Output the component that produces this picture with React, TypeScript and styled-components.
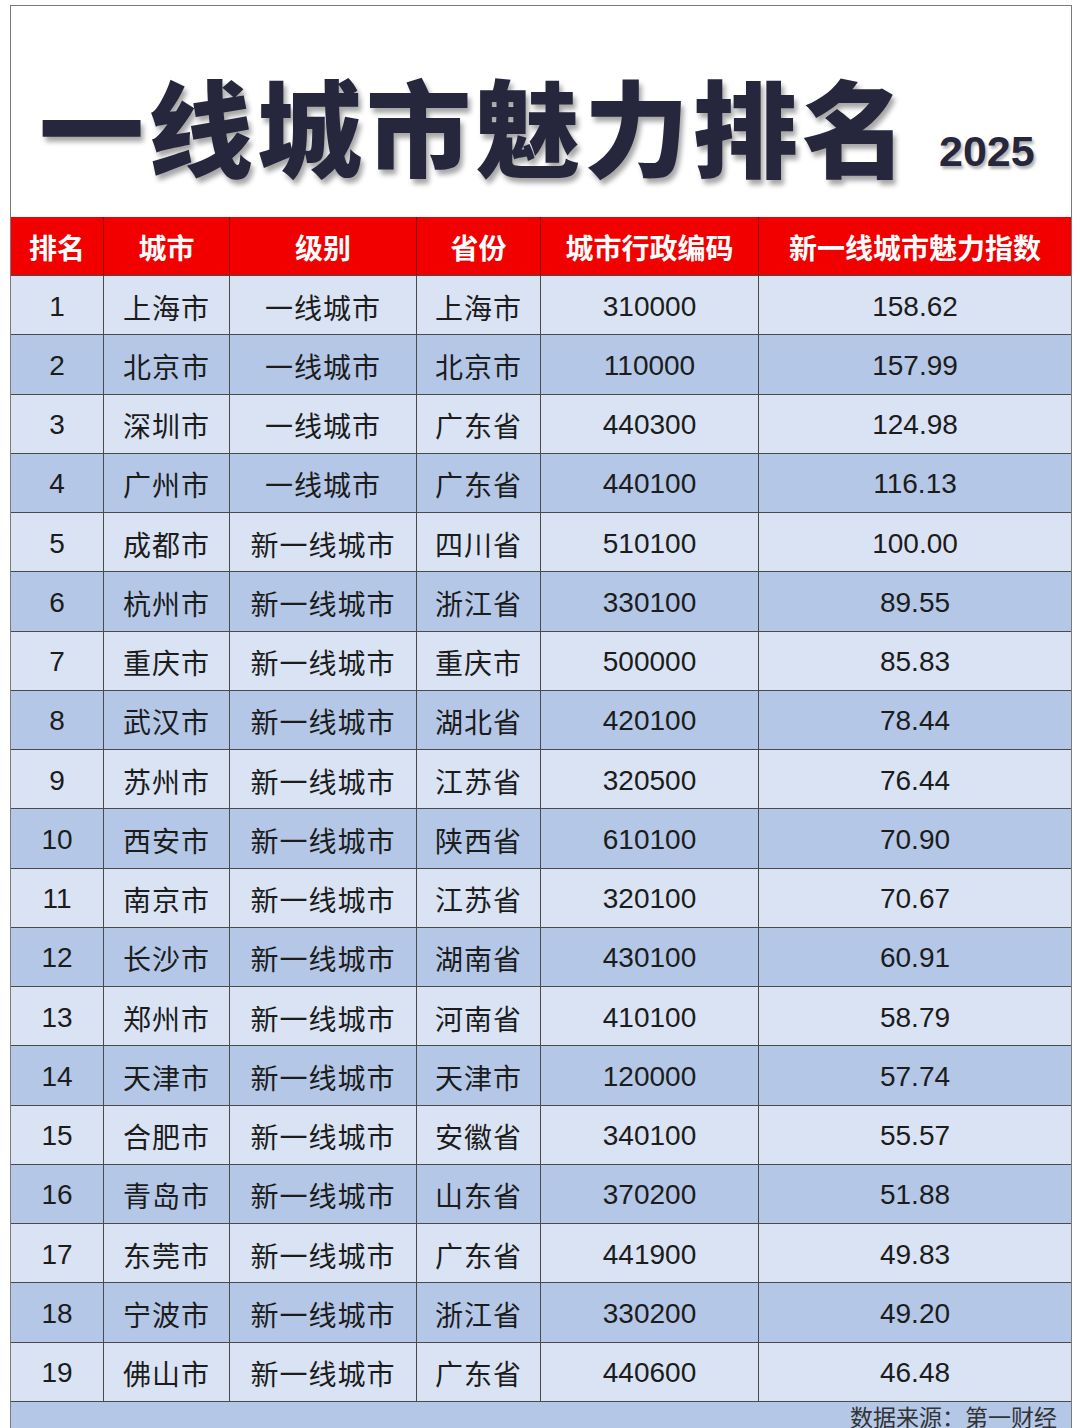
import React from 'react'
import styled, { createGlobalStyle } from 'styled-components'

const GlobalStyle = createGlobalStyle`
  html, body {
    margin: 0;
    padding: 0;
    background: #ffffff;
  }
  body {
    font-family: "Noto Sans CJK SC", "Noto Sans", sans-serif;
  }
`

type Row = [string, string, string, string, string, string]

const rows: Row[] = [
  ['1', '上海市', '一线城市', '上海市', '310000', '158.62'],
  ['2', '北京市', '一线城市', '北京市', '110000', '157.99'],
  ['3', '深圳市', '一线城市', '广东省', '440300', '124.98'],
  ['4', '广州市', '一线城市', '广东省', '440100', '116.13'],
  ['5', '成都市', '新一线城市', '四川省', '510100', '100.00'],
  ['6', '杭州市', '新一线城市', '浙江省', '330100', '89.55'],
  ['7', '重庆市', '新一线城市', '重庆市', '500000', '85.83'],
  ['8', '武汉市', '新一线城市', '湖北省', '420100', '78.44'],
  ['9', '苏州市', '新一线城市', '江苏省', '320500', '76.44'],
  ['10', '西安市', '新一线城市', '陕西省', '610100', '70.90'],
  ['11', '南京市', '新一线城市', '江苏省', '320100', '70.67'],
  ['12', '长沙市', '新一线城市', '湖南省', '430100', '60.91'],
  ['13', '郑州市', '新一线城市', '河南省', '410100', '58.79'],
  ['14', '天津市', '新一线城市', '天津市', '120000', '57.74'],
  ['15', '合肥市', '新一线城市', '安徽省', '340100', '55.57'],
  ['16', '青岛市', '新一线城市', '山东省', '370200', '51.88'],
  ['17', '东莞市', '新一线城市', '广东省', '441900', '49.83'],
  ['18', '宁波市', '新一线城市', '浙江省', '330200', '49.20'],
  ['19', '佛山市', '新一线城市', '广东省', '440600', '46.48'],
]

const headers = ['排名', '城市', '级别', '省份', '城市行政编码', '新一线城市魅力指数']

// columns: rank, city, level, province, code, index
const columns = '92px 126px 187px 124px 218px 1fr'
const numericCols = [0, 4, 5]

const Page = styled.div`
  padding: 5px 8px 0 10px;
`

const Frame = styled.div`
  width: 1062px;
  box-sizing: border-box;
  border: 1px solid #7a7a7a;
  border-bottom: none;
`

const TitleBar = styled.div`
  height: 211px;
  display: flex;
  align-items: center;
  padding-left: 28px;
  padding-top: 24px;
  box-sizing: border-box;
`

const Title = styled.h1`
  margin: 0;
  font-family: "Noto Sans CJK SC", sans-serif;
  font-weight: 900;
  font-size: 105px;
  letter-spacing: 4px;
  line-height: 1;
  color: #26263d;
  text-shadow: 3px 5px 5px rgba(0, 0, 0, 0.35);
`

const Year = styled.span`
  margin-left: 28px;
  margin-top: 56px;
  font-family: "Liberation Sans", Arial, sans-serif;
  font-weight: 700;
  font-size: 43px;
  color: #26263d;
  text-shadow: 2px 3px 3px rgba(0, 0, 0, 0.3);
`

const GridRow = styled.div<{ $bg: string; $h: number }>`
  display: grid;
  grid-template-columns: ${columns};
  height: ${(p) => p.$h}px;
  background: ${(p) => p.$bg};
  border-bottom: 1px solid #4a4a4a;
  box-sizing: border-box;
`

const HeadCell = styled.div`
  display: flex;
  align-items: center;
  justify-content: center;
  padding-top: 2px;
  color: #ffffff;
  font-family: "Noto Sans CJK SC", sans-serif;
  font-weight: 700;
  font-size: 28px;
  border-left: 1px solid #8a0000;
  &:first-child {
    border-left: none;
  }
`

const Cell = styled.div<{ $num: boolean }>`
  display: flex;
  align-items: center;
  justify-content: center;
  padding-top: 3px;
  color: #1c1c1c;
  font-family: ${(p) =>
    p.$num ? '"Liberation Sans", Arial, sans-serif' : '"Noto Sans CJK SC", sans-serif'};
  font-size: 28px;
  letter-spacing: ${(p) => (p.$num ? '0' : '1px')};
  border-left: 1px solid #4a4a4a;
  &:first-child {
    border-left: none;
  }
`

const Footer = styled.div`
  height: 40px;
  background: #b4c7e7;
  display: flex;
  justify-content: flex-end;
  align-items: flex-start;
  padding: 3px 14px 0 0;
`

const Source = styled.span`
  font-family: "Noto Sans CJK SC", sans-serif;
  font-size: 23px;
  line-height: 1;
  color: #333333;
`

export default function App() {
  return (
    <Page>
      <GlobalStyle />
      <Frame>
        <TitleBar>
          <Title>一线城市魅力排名</Title>
          <Year>2025</Year>
        </TitleBar>
        <GridRow $bg="#f20000" $h={59}>
          {headers.map((h) => (
            <HeadCell key={h}>{h}</HeadCell>
          ))}
        </GridRow>
        {rows.map((r, i) => (
          <GridRow key={r[0]} $bg={i % 2 === 0 ? '#dae3f3' : '#b4c7e7'} $h={59.26}>
            {r.map((v, j) => (
              <Cell key={j} $num={numericCols.includes(j)}>
                {v}
              </Cell>
            ))}
          </GridRow>
        ))}
        <Footer>
          <Source>数据来源：第一财经</Source>
        </Footer>
      </Frame>
    </Page>
  )
}
